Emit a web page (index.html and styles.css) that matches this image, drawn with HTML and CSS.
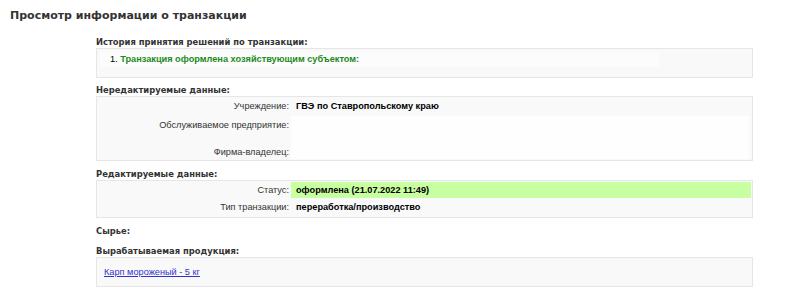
FILE: index.html
```html
<!DOCTYPE html>
<html lang="ru">
<head>
<meta charset="utf-8">
<title>Просмотр информации о транзакции</title>
<link rel="stylesheet" href="styles.css">
</head>
<body>
<h1 class="page-title">Просмотр информации о транзакции</h1>
<div class="content">
  <div class="section-label">История принятия решений по транзакции:</div>
  <div class="panel history">
    <ol class="history-list">
      <li><span class="green">Транзакция оформлена хозяйствующим субъектом:</span></li>
    </ol>
  </div>

  <div class="section-label gap6">Нередактируемые данные:</div>
  <div class="panel">
    <div class="grid">
      <div class="lbl r1">Учреждение:</div>
      <div class="val r1">ГВЭ по Ставропольскому краю</div>
      <div class="lbl r2">Обслуживаемое предприятие:</div>
      <div class="val empty r2"></div>
      <div class="lbl r3">Фирма-владелец:</div>
      <div class="val empty r3"></div>
    </div>
  </div>

  <div class="section-label gap7">Редактируемые данные:</div>
  <div class="panel">
    <div class="grid edit">
      <div class="lbl s1">Статус:</div>
      <div class="val status s1">оформлена (21.07.2022 11:49)</div>
      <div class="lbl s2">Тип транзакции:</div>
      <div class="val s2">переработка/производство</div>
    </div>
  </div>

  <div class="section-label gap7">Сырье:</div>

  <div class="section-label gap8">Вырабатываемая продукция:</div>
  <div class="panel product">
    <a href="#" class="product-link">Карп мороженый - 5 кг </a>
  </div>
</div>
</body>
</html>
```

FILE: styles.css
```css
html, body {
  margin: 0;
  padding: 0;
  background: #ffffff;
}

body {
  font-family: "Liberation Sans", Arial, sans-serif;
  font-size: 9.2px;
  color: #000;
}

.page-title {
  margin: 0;
  padding: 8px 0 0 10px;
  font-family: "DejaVu Sans", Verdana, sans-serif;
  font-size: 11px;
  font-weight: bold;
  color: #333;
  line-height: 16px;
  height: 16px;
}

.content {
  margin: 12px 0 0 96px;
  width: 657px;
}

.section-label {
  font-family: "DejaVu Sans", Verdana, sans-serif;
  font-weight: bold;
  font-size: 8.4px;
  color: #333;
  line-height: 12px;
  height: 12px;
}

.gap6 { margin-top: 6px; }
.gap7 { margin-top: 7px; }
.gap8 { margin-top: 8px; }

.panel {
  border: 1px solid #e6e6e6;
  background: #f9f9f9;
}

.history {
  height: 28px;
  padding-top: 2px;
  box-sizing: border-box;
  height: 30px;
}

.history-list {
  margin: 0;
  padding: 1px 0 0 3px;
  list-style: none;
}

.history-list li {
  width: 549px;
  height: 15px;
  line-height: 15px;
  background: #fcfcfc;
  padding-left: 10px;
  box-sizing: border-box;
  width: 559px;
}

.history-list li::before {
  content: "1. ";
  color: #000;
}

.green {
  color: #1c8a1c;
  font-weight: bold;
}

.grid {
  display: grid;
  grid-template-columns: 194px 1fr;
  padding: 0 3px 1px 0;
}

.grid.edit {
  padding: 1px 1px 1px 0;
}

.lbl {
  text-align: right;
  padding-right: 2px;
  color: #333;
}

.val {
  padding-left: 5px;
  font-weight: bold;
}

.r1 { height: 19px; line-height: 19px; }
.r2 { height: 30px; line-height: 18px; }
.r3 { height: 13px; line-height: 13px; }
.s1 { height: 16px; line-height: 16px; }
.s2 { height: 18px; line-height: 18px; }

.val.empty {
  background: #fefefe;
}

.status {
  background: #c8ffa0;
}

.product {
  height: 28px;
  box-sizing: content-box;
  display: flex;
  align-items: center;
  padding-left: 7px;
}

.product-link {
  color: #3333cc;
  text-decoration: underline;
}
```
